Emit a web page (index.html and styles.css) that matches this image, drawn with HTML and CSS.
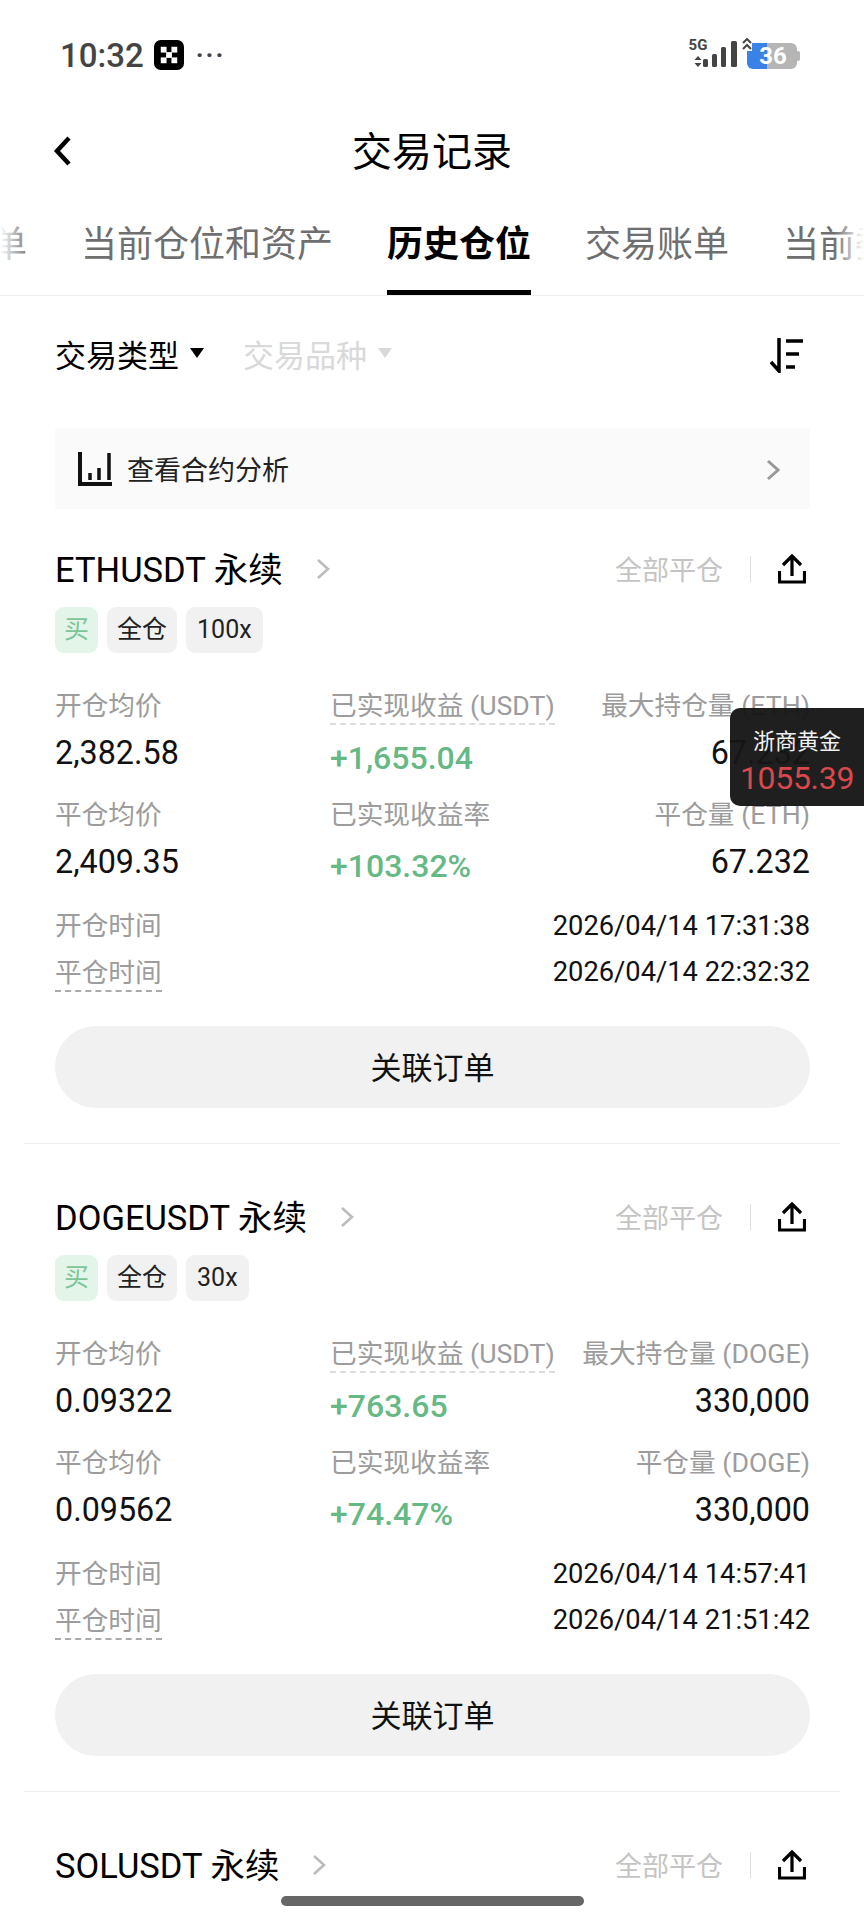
FILE: index.html
```html
<!DOCTYPE html>
<html>
<head>
  <meta charset="utf-8">
  <title>交易记录</title>
  <link rel="stylesheet" href="styles.css">
</head>
<body>
  <div class="status">
    <div class="status-left">
      <span class="clock">10:32</span>
      <svg class="okx" width="30" height="30" viewBox="0 0 31 31">
        <rect width="31" height="31" rx="7" fill="#000"/>
        <g fill="#fff">
          <rect x="7" y="7" width="6" height="6"/>
          <rect x="18" y="7" width="6" height="6"/>
          <rect x="12.5" y="12.5" width="6" height="6"/>
          <rect x="7" y="18" width="6" height="6"/>
          <rect x="18" y="18" width="6" height="6"/>
        </g>
      </svg>
      <span class="more">···</span>
    </div>
    <div class="status-right">
      <div class="net">
        <span class="net-label">5G</span>
        <svg width="8" height="11" viewBox="0 0 8 11"><path d="M4 0l3.500 4h-7zM4 11L.5 7h7z" fill="#444"/></svg>
      </div>
      <svg class="signal" width="36" height="28" viewBox="0 0 36 28">
        <g fill="#444">
          <rect x="1" y="18" width="5" height="8" rx="1.500"/>
          <rect x="10" y="13" width="5" height="13" rx="1.500"/>
          <rect x="19" y="6" width="5" height="20" rx="1.500"/>
          <rect x="29" y="0" width="6" height="26" rx="1.500"/>
        </g>
      </svg>
      <div class="battery">
        <svg class="charge" width="10" height="13" viewBox="0 0 10 13"><path d="M1 5l4-4 4 4M1 11l4-4 4 4" fill="none" stroke="#444" stroke-width="2"/></svg>
        <div class="battery-body">36</div>
        <div class="battery-nub"></div>
      </div>
    </div>
  </div>

  <div class="nav">
    <svg class="back" width="20" height="32" viewBox="0 0 20 32"><path d="M16 3L4 16l12 13" fill="none" stroke="#000" stroke-width="4.500"/></svg>
    <h1>交易记录</h1>
  </div>

  <div class="tabs">
    <span class="tab">单</span>
    <span class="tab">当前仓位和资产</span>
    <span class="tab active">历史仓位</span>
    <span class="tab">交易账单</span>
    <span class="tab">当前委托</span>
  </div>

  <div class="filters">
    <span class="filter">交易类型<i class="caret"></i></span>
    <span class="filter off">交易品种<i class="caret"></i></span>
    <svg class="sort" width="36" height="36" viewBox="0 0 36 36">
      <path d="M11 1v33L3 25" fill="none" stroke="#000" stroke-width="3.500"/>
      <path d="M18 4h17M18 17h13M18 30h9" fill="none" stroke="#000" stroke-width="3.500"/>
    </svg>
  </div>

  <div class="analysis">
    <svg width="34" height="34" viewBox="0 0 34 34">
      <path d="M2 0v32h32" fill="none" stroke="#111" stroke-width="4"/>
      <path d="M12 21v7M21 16v12M31 1v27" fill="none" stroke="#111" stroke-width="3.500"/>
    </svg>
    <span class="analysis-text">查看合约分析</span>
    <svg class="analysis-arrow" width="14" height="22" viewBox="0 0 14 22"><path d="M2 2l10 9-10 9" fill="none" stroke="#999" stroke-width="3"/></svg>
  </div>

  <div class="card">
    <div class="card-head">
      <span class="symbol">ETHUSDT 永续</span>
      <svg class="go" width="14" height="22" viewBox="0 0 14 22"><path d="M2 2l10 9-10 9" fill="none" stroke="#bbb" stroke-width="2.500"/></svg>
      <span class="close-all">全部平仓</span>
      <i class="sep"></i>
      <svg class="share" width="28" height="30" viewBox="0 0 28 30"><path d="M14 22V2M5 11l9-9 9 9M1.500 17v11h25V17" fill="none" stroke="#000" stroke-width="3.200"/></svg>
    </div>
    <div class="tags">
      <span class="tag buy">买</span>
      <span class="tag">全仓</span>
      <span class="tag">100x</span>
    </div>
    <div class="metrics">
      <div class="metric"><div class="label">开仓均价</div><div class="value">2,382.58</div></div>
      <div class="metric"><div class="label"><span class="dash">已实现收益 (USDT)</span></div><div class="value up">+1,655.04</div></div>
      <div class="metric right"><div class="label">最大持仓量 (ETH)</div><div class="value">67.232</div></div>
      <div class="metric"><div class="label">平仓均价</div><div class="value">2,409.35</div></div>
      <div class="metric"><div class="label">已实现收益率</div><div class="value up">+103.32%</div></div>
      <div class="metric right"><div class="label">平仓量 (ETH)</div><div class="value">67.232</div></div>
    </div>
    <div class="times">
      <div class="time-row"><span class="label">开仓时间</span><span>2026/04/14 17:31:38</span></div>
      <div class="time-row"><span class="label dash-dark">平仓时间</span><span>2026/04/14 22:32:32</span></div>
    </div>
    <div class="orders">关联订单</div>
  </div>

  <div class="card">
    <div class="card-head">
      <span class="symbol">DOGEUSDT 永续</span>
      <svg class="go" width="14" height="22" viewBox="0 0 14 22"><path d="M2 2l10 9-10 9" fill="none" stroke="#bbb" stroke-width="2.500"/></svg>
      <span class="close-all">全部平仓</span>
      <i class="sep"></i>
      <svg class="share" width="28" height="30" viewBox="0 0 28 30"><path d="M14 22V2M5 11l9-9 9 9M1.500 17v11h25V17" fill="none" stroke="#000" stroke-width="3.200"/></svg>
    </div>
    <div class="tags">
      <span class="tag buy">买</span>
      <span class="tag">全仓</span>
      <span class="tag">30x</span>
    </div>
    <div class="metrics">
      <div class="metric"><div class="label">开仓均价</div><div class="value">0.09322</div></div>
      <div class="metric"><div class="label"><span class="dash">已实现收益 (USDT)</span></div><div class="value up">+763.65</div></div>
      <div class="metric right"><div class="label">最大持仓量 (DOGE)</div><div class="value">330,000</div></div>
      <div class="metric"><div class="label">平仓均价</div><div class="value">0.09562</div></div>
      <div class="metric"><div class="label">已实现收益率</div><div class="value up">+74.47%</div></div>
      <div class="metric right"><div class="label">平仓量 (DOGE)</div><div class="value">330,000</div></div>
    </div>
    <div class="times">
      <div class="time-row"><span class="label">开仓时间</span><span>2026/04/14 14:57:41</span></div>
      <div class="time-row"><span class="label dash-dark">平仓时间</span><span>2026/04/14 21:51:42</span></div>
    </div>
    <div class="orders">关联订单</div>
  </div>

  <div class="card">
    <div class="card-head">
      <span class="symbol">SOLUSDT 永续</span>
      <svg class="go" width="14" height="22" viewBox="0 0 14 22"><path d="M2 2l10 9-10 9" fill="none" stroke="#bbb" stroke-width="2.500"/></svg>
      <span class="close-all">全部平仓</span>
      <i class="sep"></i>
      <svg class="share" width="28" height="30" viewBox="0 0 28 30"><path d="M14 22V2M5 11l9-9 9 9M1.500 17v11h25V17" fill="none" stroke="#000" stroke-width="3.200"/></svg>
    </div>
  </div>

  <div class="float-box">
    <div class="float-name">浙商黄金</div>
    <div class="float-price">1055.39</div>
  </div>

  <div class="home-bar"></div>
</body>
</html>
```

FILE: styles.css
```css
body {
  margin: 0;
  width: 864px;
  height: 1920px;
  overflow: hidden;
  position: relative;
  background: #fff;
  color: #000;
  font-family: Roboto, "Noto Sans CJK SC", sans-serif;
}

.status {
  height: 110px;
  display: flex;
  justify-content: space-between;
  align-items: center;
  padding: 0 64px 0 60px;
}

.status-left {
  display: flex;
  align-items: center;
}

.clock {
  font-size: 33px;
  font-weight: 500;
  color: #444;
}

.okx {
  margin-left: 10px;
}

.more {
  margin-left: 12px;
  font-size: 26px;
  font-weight: 700;
  letter-spacing: 2px;
  color: #444;
  line-height: 20px;
}

.status-right {
  display: flex;
  align-items: flex-end;
  height: 32px;
  margin-bottom: 8px;
}

.net {
  display: flex;
  flex-direction: column;
  align-items: center;
  width: 22px;
  color: #444;
}

.net-label {
  font-size: 15px;
  font-weight: 700;
  line-height: 15px;
  margin-bottom: 3px;
}

.signal {
  margin-left: -7px;
  margin-bottom: -2px;
  display: block;
}

.battery {
  display: flex;
  align-items: center;
  position: relative;
  margin-left: 9px;
  margin-bottom: -2px;
}

.charge {
  position: absolute;
  left: -5px;
  top: -5px;
  background: #fff;
}

.battery-body {
  width: 50px;
  height: 26px;
  border-radius: 6px;
  background: linear-gradient(to right, #3b82e6 0, #3b82e6 20px, #b5b5b5 20px);
  color: #fff;
  font-size: 24px;
  font-weight: 700;
  line-height: 26px;
  text-align: center;
  text-indent: 2px;
}

.battery-nub {
  width: 3px;
  height: 10px;
  background: #b5b5b5;
  border-radius: 0 2px 2px 0;
}

.nav {
  height: 80px;
  display: flex;
  align-items: center;
  justify-content: center;
  position: relative;
}

.back {
  position: absolute;
  left: 53px;
  top: 25px;
}

h1 {
  margin: 0;
  padding-bottom: 2px;
  font-size: 40px;
  font-weight: 400;
}

.tabs {
  height: 105px;
  border-bottom: 1px solid #eee;
  display: flex;
  gap: 54px;
  overflow: hidden;
  position: relative;
  white-space: nowrap;
}

.tabs:before,
.tabs:after {
  content: "";
  position: absolute;
  top: 0;
  bottom: 0;
  width: 30px;
  z-index: 1;
}

.tabs:before {
  left: 0;
  background: linear-gradient(to right, #fff, rgba(255, 255, 255, 0));
}

.tabs:after {
  right: 0;
  background: linear-gradient(to left, #fff, rgba(255, 255, 255, 0));
}

.tab {
  flex: none;
  font-size: 36px;
  line-height: 110px;
  color: #6f6f6f;
}

.tab:first-child {
  margin-left: -9px;
}

.tab.active {
  color: #000;
  font-weight: 700;
  position: relative;
}

.tab.active:after {
  content: "";
  position: absolute;
  left: 0;
  right: 0;
  top: 100px;
  height: 5px;
  background: #000;
}

.filters {
  height: 118px;
  padding: 0 60px 0 55px;
  display: flex;
  align-items: center;
  box-sizing: border-box;
}

.filter {
  font-size: 31px;
  display: flex;
  align-items: center;
  margin-right: 39px;
  padding-bottom: 4px;
}

.filter.off {
  color: #d9d9d9;
}

.caret {
  margin-left: 11px;
  border-left: 7px solid transparent;
  border-right: 7px solid transparent;
  border-top: 10px solid #000;
}

.filter.off .caret {
  border-top-color: #d9d9d9;
}

.sort {
  margin-left: auto;
}

.analysis {
  margin: 14px 54px 0 55px;
  height: 81px;
  background: #fafafa;
  display: flex;
  align-items: center;
  padding: 0 30px 0 23px;
}

.analysis-text {
  margin-left: 15px;
  font-size: 27px;
  color: #222;
}

.analysis-arrow {
  margin-left: auto;
  margin-top: 3px;
}

.card {
  margin: 0 24px;
  padding: 48px 30px 35px 31px;
  border-bottom: 1px solid #eee;
}

.analysis + .card {
  padding-top: 35px;
}

.card:last-of-type {
  border-bottom: 0;
}

.card-head {
  height: 50px;
  display: flex;
  align-items: center;
}

.symbol {
  font-size: 34.500px;
  padding-bottom: 4px;
}

.go {
  margin-left: 33px;
}

.close-all {
  margin-left: auto;
  padding-bottom: 2px;
  font-size: 27px;
  color: #c4c4c4;
}

.sep {
  width: 1px;
  height: 26px;
  margin: 0 27px;
  background: #ddd;
}

.share {
  margin-right: 4px;
}

.tags {
  margin-top: 13px;
  display: flex;
  gap: 9px;
}

.tag {
  height: 46px;
  line-height: 46px;
  padding: 0 10px;
  border-radius: 9px;
  background: #f1f1f1;
  font-size: 25px;
  color: #222;
}

.tag:last-child {
  padding: 0 11px;
}

.tag.buy {
  background: #e3f5e8;
  color: #7cc596;
  padding: 0 9px;
}

.metrics {
  margin-top: 35px;
  display: grid;
  grid-template-columns: 275px 1fr auto;
  grid-auto-rows: 108.500px;
}

.label {
  font-size: 26.700px;
  line-height: 36px;
  color: #9c9c9c;
}

.dash {
  display: inline-block;
  line-height: 34px;
  border-bottom: 2px dashed #ddd;
}

.value {
  margin-top: 9px;
  font-size: 32.300px;
  line-height: 40px;
  color: #111;
}

.value.up {
  margin-top: 13px;
  font-size: 32px;
  color: #66b885;
  font-weight: 500;
}

.metric.right {
  text-align: right;
}

.times {
  margin-top: -2px;
}

.time-row {
  height: 46px;
  display: flex;
  justify-content: space-between;
  align-items: center;
  font-size: 27.300px;
  color: #111;
}

.dash-dark {
  font-size: 26.700px;
  line-height: 34px;
  border-bottom: 2px dashed #aaa;
  margin-top: 4px;
}

.orders {
  margin-top: 31px;
  height: 82px;
  border-radius: 41px;
  background: #f1f1f1;
  text-align: center;
  font-size: 31px;
  line-height: 85px;
  color: #111;
}

.float-box {
  position: absolute;
  left: 730px;
  top: 708px;
  width: 134px;
  height: 98px;
  box-sizing: border-box;
  border-radius: 10px 0 0 10px;
  background: rgba(22, 22, 22, 0.96);
  text-align: center;
}

.float-name {
  margin-top: 19px;
  font-size: 22px;
  line-height: 30px;
  color: #f0f0f0;
}

.float-price {
  font-size: 32px;
  letter-spacing: -0.3px;
  line-height: 42px;
  color: #d9484c;
}

.home-bar {
  position: absolute;
  left: 281px;
  top: 1896px;
  width: 303px;
  height: 10px;
  border-radius: 5px;
  background: #666;
}
```
